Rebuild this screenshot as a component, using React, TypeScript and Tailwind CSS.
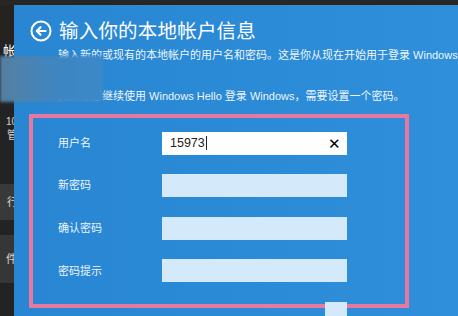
import React from 'react';

const font = { fontFamily: '"Liberation Sans", "Noto Sans CJK SC", "Noto Sans", sans-serif' };

const BackIcon: React.FC = () => (
  <svg width="22" height="22" viewBox="0 0 22 22" fill="none" stroke="white">
    <circle cx="11" cy="11" r="9.5" strokeWidth="2" />
    <path d="M15.5 11H7M10.5 7.2L6.8 11l3.7 3.8" strokeWidth="2.2" strokeLinecap="round" strokeLinejoin="round" />
  </svg>
);

const fields = ['用户名', '新密码', '确认密码', '密码提示'];

const App: React.FC = () => {
  return (
    <div className="relative w-[458px] h-[316px] overflow-hidden bg-[#232323] flex" style={font}>
      {/* 左侧被截断的窗口 */}
      <div className="w-[14px] shrink-0 flex flex-col text-white/80 text-[11px] leading-none overflow-hidden">
        <div className="h-[44px] bg-[#26221f]" />
        <div className="flex justify-end text-[13px] text-white -mr-[2px]">帐</div>
        <div className="h-[60px]" />
        <div className="flex justify-end -mr-[3px] text-[10px]">10</div>
        <div className="flex justify-end -mr-[4px] mt-[3px]">管</div>
        <div className="h-[43px]" />
        <div className="h-[36px] bg-[#393939] flex items-center justify-end -mr-[4px]">行</div>
        <div className="h-[15px]" />
        <div className="h-[48px] bg-[#363636] flex items-center justify-end -mr-[3px]">件</div>
      </div>

      {/* 蓝色设置面板 */}
      <div className="flex-1 mt-[5px] bg-gradient-to-r from-[#2886d2] to-[#2f8fdb] text-white flex flex-col">
        <div className="flex items-center gap-[7px] pl-[16px] pt-[13px]">
          <BackIcon />
          <h1 className="text-[19.5px] leading-[26px] tracking-[0.2px]">输入你的本地帐户信息</h1>
        </div>
        <div className="pl-[44px] pt-px text-[11px] leading-[20.5px] text-white/95 whitespace-nowrap">
          <p>输入新的或现有的本地帐户的用户名和密码。这是你从现在开始用于登录 Windows</p>
          <p>的帐户。</p>
          <p>如果你想继续使用 Windows Hello 登录 Windows，需要设置一个密码。</p>
        </div>

        <div className="relative ml-[15px] mt-[7px] w-[380px] h-[194px] border-[4px] border-[#e8789f]">
          <div className="flex flex-col gap-[19.6px] pt-[14px] pl-[25px]">
            {fields.map((label, i) => (
              <div key={label} className="flex items-center h-[23px]">
                <span className="w-[104px] text-[11px] text-white/95">{label}</span>
                {i === 0 ? (
                  <div className="w-[185px] h-[23px] bg-white flex items-center pl-[8px] pr-[6px] text-[12.5px] text-[#222]">
                    <span>15973</span>
                    <span className="w-px h-[14px] bg-[#222] ml-px" />
                    <span className="ml-auto text-[15px] leading-none text-black">✕</span>
                  </div>
                ) : (
                  <div className="w-[185px] h-[23px] bg-[#d4e9f9]" />
                )}
              </div>
            ))}
          </div>
          {/* 下一个输入框露出的一角 */}
          <div className="absolute left-[292px] top-[184px] w-[22px] h-[14px] bg-[#d4e9f9]" />
        </div>
      </div>

      {/* 打码区域 */}
      <div className="absolute left-0 top-[56px] w-[103px] h-[46px] bg-gradient-to-r from-[#557f9f] via-[#3f85c0] to-[#3a88c9] blur-[1.5px]" />
      <div className="absolute left-0 top-0 w-full h-[5px] bg-[#262626]" />
    </div>
  );
};

export default App;
